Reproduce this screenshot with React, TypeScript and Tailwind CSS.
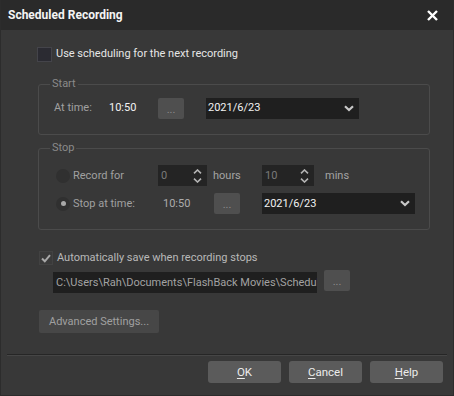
import React from "react";

const Chevron = () => (
  <svg width="10" height="7" viewBox="0 0 10 7" className="shrink-0">
    <path d="M1 1.2 L5 5 L9 1.2" fill="none" stroke="#c8c8c8" strokeWidth="2.2" />
  </svg>
);

const SpinArrows = () => (
  <div className="flex flex-col items-center gap-[4px]">
    <svg width="9" height="5" viewBox="0 0 9 5">
      <path d="M1 4.3 L4.5 1 L8 4.3" fill="none" stroke="#b4b4b4" strokeWidth="1.6" />
    </svg>
    <svg width="9" height="5" viewBox="0 0 9 5">
      <path d="M1 0.7 L4.5 4 L8 0.7" fill="none" stroke="#b4b4b4" strokeWidth="1.6" />
    </svg>
  </div>
);

const DotsButton = ({ cls = "" }: { cls?: string }) => (
  <div className={`w-[26px] h-[21px] bg-[#4f4f4f] rounded-[2px] flex items-end justify-center pb-[4px] text-[#8e8e8e] text-[11px] leading-[11px] shrink-0 ${cls}`}>
    ...
  </div>
);

const Combo = ({ w }: { w: string }) => (
  <div className={`${w} h-[21px] bg-[#1f1f1f] flex items-center justify-between pl-[2px] pr-[5px] text-[#f2f2f2]`}>
    <span>2021/6/23</span>
    <Chevron />
  </div>
);

const Radio = ({ checked }: { checked?: boolean }) => (
  <div className="w-[14px] h-[14px] rounded-full bg-[#303030] flex items-center justify-center shrink-0">
    {checked && <div className="w-[5px] h-[5px] rounded-full bg-[#a8a8a8]" />}
  </div>
);

const BottomButton = ({ first, rest }: { first: string; rest: string }) => (
  <div className="w-[73px] h-[22px] bg-[#5b5b5b] rounded-[3px] flex items-center justify-center text-[#ececec] text-[11.5px]">
    <span>
      <span className="underline underline-offset-[2px]">{first}</span>
      {rest}
    </span>
  </div>
);

export default function App() {
  return (
    <div className="w-[454px] h-[396px] bg-[#383838] flex flex-col font-['Roboto',sans-serif] text-[11px] leading-[16px] overflow-hidden border-x border-b border-[#2c2c2c]">
      {/* title bar */}
      <div className="h-[30px] bg-[#2a2a2a] flex items-center justify-between pl-[7px] pr-[15px] shrink-0">
        <span className="font-bold text-[#f4f4f4] text-[12px]">Scheduled Recording</span>
        <svg width="11" height="11" viewBox="0 0 11 11">
          <path d="M1 1 L10 10 M10 1 L1 10" stroke="#ffffff" strokeWidth="2.4" />
        </svg>
      </div>

      <div className="flex flex-col flex-1">
        {/* use scheduling */}
        <div className="mt-[16px] ml-[36px] h-[16px] flex items-center gap-[4px]">
          <div className="w-[15px] h-[15px] bg-[#2b2b32] border border-[#44444a]" />
          <span className="text-[#e6e6e6]">Use scheduling for the next recording</span>
        </div>

        {/* Start */}
        <fieldset className="mt-[14px] ml-[37px] w-[392px] border border-[#4b4b4b] rounded-[3px] px-[11px] pt-[5px] pb-[15px]">
          <legend className="px-[2px] text-[#8a8a8a] leading-[16px]">Start</legend>
          <div className="h-[22px] flex items-center pl-[4px]">
            <span className="w-[55px] text-[#a0a0a0]">At time:</span>
            <span className="w-[49px] text-[#f2f2f2]">10:50</span>
            <DotsButton />
            <Combo w="ml-[22px] w-[153px]" />
          </div>
        </fieldset>

        {/* Stop */}
        <fieldset className="mt-[5px] ml-[37px] w-[392px] border border-[#4b4b4b] rounded-[3px] px-[11px] pt-[9px] pb-[15px]">
          <legend className="px-[2px] text-[#8a8a8a] leading-[16px]">Stop</legend>
          <div className="h-[21px] flex items-center pl-[6px]">
            <Radio />
            <span className="ml-[3px] w-[85px] text-[#a0a0a0]">Record for</span>
            <div className="w-[49px] h-[21px] bg-[#242424] flex items-center justify-between pl-[3px] pr-[5px] text-[#7a7a7a]">
              <span>0</span>
              <SpinArrows />
            </div>
            <span className="ml-[6px] w-[49px] text-[#a4a4a4]">hours</span>
            <div className="w-[52px] h-[21px] bg-[#242424] flex items-center justify-between pl-[3px] pr-[5px] text-[#7a7a7a]">
              <span>10</span>
              <SpinArrows />
            </div>
            <span className="ml-[11px] text-[#a4a4a4]">mins</span>
          </div>
          <div className="mt-[7px] h-[21px] flex items-center pl-[6px]">
            <Radio checked />
            <span className="ml-[3px] w-[90px] text-[#a0a0a0]">Stop at time:</span>
            <span className="w-[51px] text-[#acacac]">10:50</span>
            <DotsButton />
            <Combo w="ml-[22px] w-[153px]" />
          </div>
        </fieldset>

        {/* auto save */}
        <div className="mt-[21px] ml-[38px] h-[14px] flex items-center gap-[4px]">
          <div className="w-[14px] h-[14px] border border-[#424242] bg-[#3a3a3a] flex items-center justify-center">
            <svg width="10" height="9" viewBox="0 0 10 9">
              <path d="M1 4.5 L3.8 7.3 L9 1.2" fill="none" stroke="#a9a9a9" strokeWidth="2" />
            </svg>
          </div>
          <span className="text-[#b8b8b8]">Automatically save when recording stops</span>
        </div>

        <div className="mt-[5px] ml-[52px] flex items-start gap-[7px]">
          <div className="mt-[2px] w-[264px] h-[21px] bg-[#1f1f1f] flex items-center pl-[3px] overflow-hidden text-[#a2a2a2]">
            <span className="block w-full overflow-hidden whitespace-nowrap">C:\Users\Rah\Documents\FlashBack Movies\Scheduled</span>
          </div>
          <DotsButton cls="h-[20px]" />
        </div>

        <div className="mt-[17px] ml-[38px] w-[120px] h-[23px] bg-[#474747] rounded-[2px] flex items-center justify-center text-[#a0a0a0]">
          Advanced Settings...
        </div>

        {/* separator */}
        <div className="mt-[21px] ml-[6px] w-[440px] h-[2px] bg-[#262626] border-b border-[#464646]" />

        <div className="mt-[5px] flex justify-end gap-[8px] pr-[10px]">
          <BottomButton first="O" rest="K" />
          <BottomButton first="C" rest="ancel" />
          <BottomButton first="H" rest="elp" />
        </div>
      </div>
    </div>
  );
}
